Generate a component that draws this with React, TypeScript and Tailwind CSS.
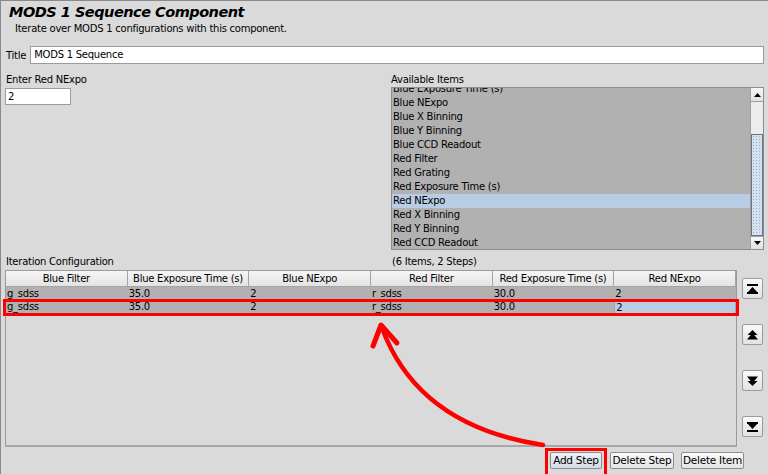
import React from "react";

const listItems = [
  "Blue Exposure Time (s)",
  "Blue NExpo",
  "Blue X Binning",
  "Blue Y Binning",
  "Blue CCD Readout",
  "Red Filter",
  "Red Grating",
  "Red Exposure Time (s)",
  "Red NExpo",
  "Red X Binning",
  "Red Y Binning",
  "Red CCD Readout",
];

const columns = [
  "Blue Filter",
  "Blue Exposure Time (s)",
  "Blue NExpo",
  "Red Filter",
  "Red Exposure Time (s)",
  "Red NExpo",
];

const rows = [
  ["g_sdss", "35.0", "2", "r_sdss", "30.0", "2"],
  ["g_sdss", "35.0", "2", "r_sdss", "30.0", "2"],
];

const MoveIcon = ({ kind }: { kind: "top" | "up" | "down" | "bottom" }) => (
  <svg width="11" height="10" viewBox="0 0 11 10">
    {kind === "top" && (
      <>
        <rect x="0" y="0" width="11" height="2" fill="#000" />
        <polygon points="5.5,3 11,9 0,9" fill="#000" />
        <rect x="0" y="8" width="11" height="2" fill="#000" />
      </>
    )}
    {kind === "up" && (
      <>
        <polygon points="5.5,0 10.5,5 0.5,5" fill="#000" />
        <polygon points="5.5,3 11,9.5 0,9.5" fill="#000" />
      </>
    )}
    {kind === "down" && (
      <>
        <polygon points="0,0.5 11,0.5 5.5,7" fill="#000" />
        <polygon points="0.5,5 10.5,5 5.5,10" fill="#000" />
      </>
    )}
    {kind === "bottom" && (
      <>
        <rect x="0" y="0" width="11" height="2" fill="#000" />
        <polygon points="0,1 11,1 5.5,7" fill="#000" />
        <rect x="0" y="8" width="11" height="2" fill="#000" />
      </>
    )}
  </svg>
);

const SideButton = ({ kind }: { kind: "top" | "up" | "down" | "bottom" }) => (
  <button className="w-[21px] h-[21px] flex items-center justify-center border border-[#9a9a9a] bg-gradient-to-b from-[#fafafa] to-[#e2e2e2] rounded-[2px]">
    <MoveIcon kind={kind} />
  </button>
);

const PushButton = ({ label, width, primary }: { label: string; width: string; primary?: boolean }) => (
  <button
    className={`${width} h-[17px] border border-[#8e8e8e] rounded-[2px] text-[10.5px] leading-[15px] text-center bg-gradient-to-b ${
      primary ? "from-[#eef2f7] to-[#d3dbe5]" : "from-[#fbfbfb] to-[#e4e4e4]"
    }`}
  >
    {label}
  </button>
);

export default function App() {
  return (
    <div className="relative w-[768px] h-[474px] bg-[#dadada] border-t border-l border-[#8a8a8a] overflow-hidden font-['DejaVu_Sans',sans-serif] text-[10px] tracking-[-0.25px] text-black">
      {/* header */}
      <div className="h-[22px] pl-[8px] text-[14.5px] tracking-[-0.5px] leading-[22px] font-bold italic">MODS 1 Sequence Component</div>
      <div className="h-[12px] pl-[14px] leading-[12px]">Iterate over MODS 1 configurations with this component.</div>

      <div className="mt-[11px] flex items-center h-[18px] pl-[5px] pr-[4px] gap-[4px]">
        <span>Title</span>
        <div className="flex-1 h-[18px] bg-white border border-[#9b9b9b] pl-[3px] leading-[16px]">MODS 1 Sequence</div>
      </div>

      <div className="mt-[9px] flex pl-[4px]">
        <div className="w-[386px]">
          <div className="h-[14px] leading-[14px] pl-[1px]">Enter Red NExpo</div>
          <div className="mt-[1px] w-[66px] h-[17px] bg-white border border-[#9b9b9b] pl-[2px] leading-[15px]">2</div>
        </div>
        <div className="w-[373px]">
          <div className="h-[14px] leading-[14px]">Available Items</div>
          <div className="flex h-[163px] border border-[#8e8e8e]">
            <div className="flex-1 bg-[#b1b1b1] overflow-hidden">
              <div className="mt-[-6px]">
                {listItems.map((item) => (
                  <div
                    key={item}
                    className={`h-[14px] leading-[14px] pl-[1px] ${item === "Red NExpo" ? "bg-[#b8cde3]" : ""}`}
                  >
                    {item}
                  </div>
                ))}
              </div>
            </div>
            <div className="w-[13px] flex flex-col bg-[#e6e6e6] border-l border-[#a0a0a0]">
              <div className="h-[14px] flex items-center justify-center bg-gradient-to-b from-[#f8f8f8] to-[#e0e0e0] border-b border-[#a0a0a0]">
                <svg width="7" height="4" viewBox="0 0 7 4"><polygon points="3.5,0 7,4 0,4" fill="#000" /></svg>
              </div>
              <div className="h-[32px] bg-[#ececec]" />
              <div className="flex-1 border border-[#6a7486] bg-[#d6e1f0] bg-[radial-gradient(circle,#9fb0c9_0.7px,transparent_1px)] bg-[length:3px_3px]" />
              <div className="h-[13px] flex items-center justify-center bg-gradient-to-b from-[#f8f8f8] to-[#e0e0e0] border-t border-[#a0a0a0]">
                <svg width="7" height="4" viewBox="0 0 7 4"><polygon points="0,0 7,0 3.5,4" fill="#000" /></svg>
              </div>
            </div>
          </div>
        </div>
      </div>

      <div className="mt-[5px] flex pl-[5px] h-[14px] leading-[14px]">
        <div className="w-[386px]">Iteration Configuration</div>
        <div>(6 Items, 2 Steps)</div>
      </div>

      <div className="mt-[1px] flex pl-[4px] h-[177px]">
        <div className="w-[732px] border border-[#9a9a9a] border-b-2 border-b-[#a8a8a8] flex flex-col">
          <div className="grid grid-cols-6 h-[16px]">
            {columns.map((c) => (
              <div
                key={c}
                className="text-center leading-[15px] border-r border-b border-[#a4a4a4] bg-gradient-to-b from-[#f6f6f6] to-[#e3e3e3]"
              >
                {c}
              </div>
            ))}
          </div>
          {rows.map((r, i) => (
            <div key={i} className="grid grid-cols-6 h-[13px] bg-[#b1b1b1]">
              {r.map((v, j) => (
                <div
                  key={j}
                  className={`leading-[13px] pl-[1px] ${
                    i === 1 && j === 5 ? "bg-[#b8cde3] border border-[#8fa8c6] leading-[11px]" : ""
                  }`}
                >
                  {v}
                </div>
              ))}
            </div>
          ))}
        </div>
        <div className="ml-[5px] flex flex-col gap-[25px] pt-[8px]">
          <SideButton kind="top" />
          <SideButton kind="up" />
          <SideButton kind="down" />
          <SideButton kind="bottom" />
        </div>
      </div>

      <div className="mt-[5px] flex justify-end pr-[24px]">
        <PushButton label="Add Step" width="w-[52px]" primary />
        <div className="w-[8px]" />
        <PushButton label="Delete Step" width="w-[64px]" />
        <div className="w-[7px]" />
        <PushButton label="Delete Item" width="w-[63px]" />
      </div>

      {/* red annotations */}
      <div className="absolute left-[2px] top-[298px] w-[736px] h-[17px] border-[3px] border-[#ff0000] pointer-events-none" />
      <div className="absolute left-[544px] top-[447px] w-[62px] h-[29px] border-[3px] border-[#ff0000] pointer-events-none" />
      <svg className="absolute left-0 top-0 pointer-events-none" width="768" height="474" viewBox="0 0 768 474">
        <path d="M 542 444 C 470 433, 408 400, 381 327" fill="none" stroke="#ff0000" strokeWidth="4.5" strokeLinecap="round" />
        <polyline points="372,345 380,324 396,342" fill="none" stroke="#ff0000" strokeWidth="5" strokeLinejoin="round" strokeLinecap="round" />
      </svg>
    </div>
  );
}
